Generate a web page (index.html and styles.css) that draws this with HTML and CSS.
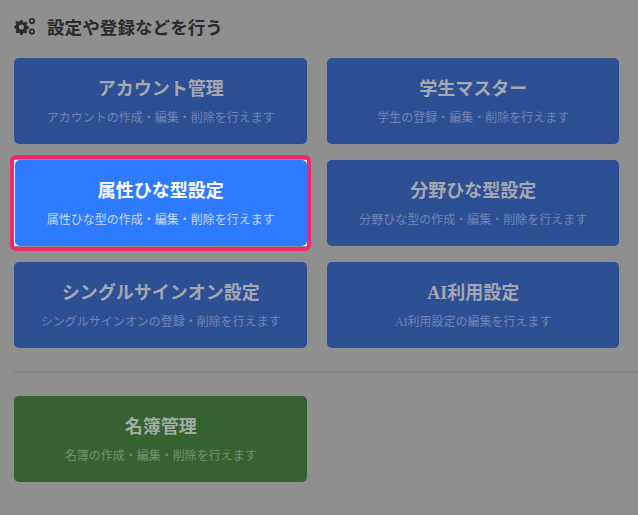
FILE: index.html
```html
<!DOCTYPE html>
<html lang="ja">
<head>
    <meta charset="UTF-8">
    <meta name="viewport" content="width=device-width, initial-scale=1.0">
    <title>設定</title>
    <link rel="stylesheet" href="styles.css">
</head>

<body>
    <main class="settings">
        <h2 class="settings-title">
            <svg class="settings-icon" viewBox="0 0 20 16" aria-hidden="true">
                <path fill-rule="evenodd" d="M5.500 2h2.200l.4 1.700 1.200.5 1.500-.9 1.500 1.500-.9 1.500.5 1.200 1.700.4v2.200l-1.700.4-.5 1.200.9 1.500-1.500 1.500-1.500-.9-1.200.5-.4 1.700H5.500l-.4-1.700-1.200-.5-1.500.9-1.500-1.500.9-1.500-.5-1.200L0 9.500V7.300l1.300-.4.5-1.200-.9-1.500 1.500-1.500 1.500.9 1.200-.5zM6.600 6a2.400 2.400 0 1 0 0 4.800 2.400 2.400 0 0 0 0-4.800z"/>
                <path fill-rule="evenodd" d="M16.500 0a2.900 2.900 0 1 1 0 5.800 2.900 2.900 0 0 1 0-5.800zm0 1.700a1.200 1.200 0 1 0 0 2.400 1.200 1.200 0 0 0 0-2.400zM16.500 9.800a2.900 2.900 0 1 1 0 5.800 2.900 2.900 0 0 1 0-5.800zm0 1.700a1.200 1.200 0 1 0 0 2.400 1.200 1.200 0 0 0 0-2.400z"/>
            </svg>
            設定や登録などを行う
        </h2>

        <div class="card-grid">
            <a class="card card-blue" href="#">
                <strong>アカウント管理</strong>
                <span>アカウントの作成・編集・削除を行えます</span>
            </a>
            <a class="card card-blue" href="#">
                <strong>学生マスター</strong>
                <span>学生の登録・編集・削除を行えます</span>
            </a>
            <a class="card card-active" href="#">
                <strong>属性ひな型設定</strong>
                <span>属性ひな型の作成・編集・削除を行えます</span>
            </a>
            <a class="card card-blue" href="#">
                <strong>分野ひな型設定</strong>
                <span>分野ひな型の作成・編集・削除を行えます</span>
            </a>
            <a class="card card-blue" href="#">
                <strong>シングルサインオン設定</strong>
                <span>シングルサインオンの登録・削除を行えます</span>
            </a>
            <a class="card card-blue" href="#">
                <strong>AI利用設定</strong>
                <span>AI利用設定の編集を行えます</span>
            </a>
        </div>

        <hr class="divider">

        <div class="card-grid">
            <a class="card card-green" href="#">
                <strong>名簿管理</strong>
                <span>名簿の作成・編集・削除を行えます</span>
            </a>
        </div>
    </main>
</body>

</html>
```

FILE: styles.css
```css
body {
    margin: 0;
    background-color: #8f8f8f;
    font-family: "Liberation Serif", "Noto Sans CJK JP", serif;
    overflow: hidden;
}

.settings {
    padding: 14px 0 0 14px;
}

.settings-title {
    display: flex;
    align-items: center;
    gap: 11px;
    margin: 0 0 19px;
    height: 25px;
    font-size: 17.6px;
    font-weight: 700;
    color: #2b2b2b;
}

.settings-icon {
    width: 22px;
    height: 17px;
    fill: #2b2b2b;
}

.card-grid {
    display: grid;
    grid-template-columns: 292.5px 292.5px;
    column-gap: 20px;
    row-gap: 16px;
}

.card {
    position: relative;
    display: flex;
    flex-direction: column;
    align-items: center;
    height: 86px;
    box-sizing: border-box;
    padding: 18px 0 0 1px;
    border-radius: 5px;
    text-decoration: none;
    white-space: nowrap;
}

.card strong {
    font-size: 18px;
    line-height: 27px;
    font-weight: 700;
}

.card span {
    margin-top: 6px;
    font-size: 12px;
    line-height: 18px;
}

.card-blue {
    background-color: #2d4f94;
    color: #a5a8b0;
}

.card-blue span {
    color: #6f84b3;
}

.card-green {
    background-color: #356330;
    color: #a3aca3;
}

.card-green span {
    color: #6f9170;
}

/* highlighted step of the tour */
.card-active {
    background-color: #2f7bff;
    color: #fff;
    box-shadow: inset 1px 0 #fff;
}

.card-active span {
    color: #c4d9ff;
}

.card-active::before {
    content: "";
    position: absolute;
    inset: -5px -4px;
    border: 4px solid #f0286e;
    border-radius: 6px;
}

.card-active::after {
    content: "";
    position: absolute;
    inset: 0;
    z-index: -1;
    background-color: #fff;
}

.divider {
    height: 2px;
    margin: 23px 0 23px;
    border: 0;
    background-color: #848484;
}
```
